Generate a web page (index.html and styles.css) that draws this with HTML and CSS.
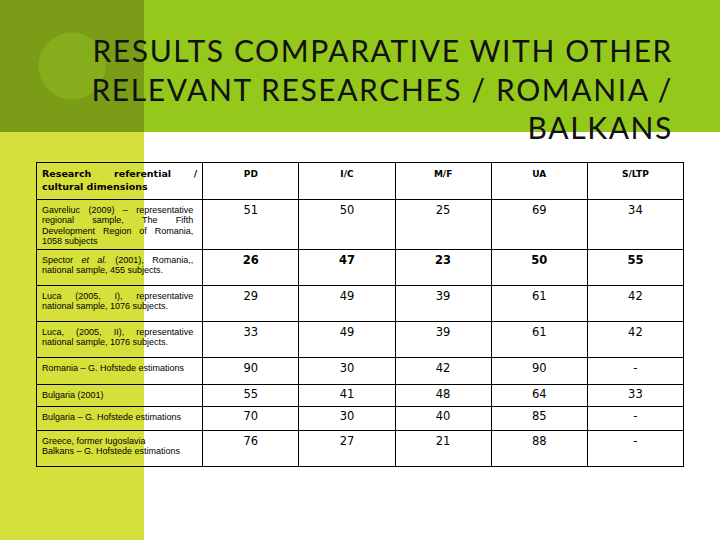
FILE: index.html
```html
<!DOCTYPE html>
<html>
<head>
<meta charset="utf-8">
<link rel="stylesheet" href="styles.css">
</head>
<body>
<div class="slide">
  <h1 class="title">RESULTS COMPARATIVE WITH OTHER<br>RELEVANT RESEARCHES / ROMANIA /<br>BALKANS</h1>
  <table class="data">
    <colgroup>
      <col class="c-ref"><col class="c-num"><col class="c-num"><col class="c-num"><col class="c-num"><col class="c-num">
    </colgroup>
    <tr class="r-head">
      <th class="ref">Research referential / cultural dimensions</th>
      <th>PD</th><th>I/C</th><th>M/F</th><th>UA</th><th>S/LTP</th>
    </tr>
    <tr class="r1">
      <td class="ref">Gavreliuc (2009) – representative regional sample, The Fifth Development Region of Romania, 1058 subjects</td>
      <td>51</td><td>50</td><td>25</td><td>69</td><td>34</td>
    </tr>
    <tr class="r2 bold">
      <td class="ref">Spector <i>et al.</i> (2001), Romania,, national sample, 455 subjects.</td>
      <td>26</td><td>47</td><td>23</td><td>50</td><td>55</td>
    </tr>
    <tr class="r3">
      <td class="ref">Luca (2005, I), representative national sample, 1076 subjects.</td>
      <td>29</td><td>49</td><td>39</td><td>61</td><td>42</td>
    </tr>
    <tr class="r4">
      <td class="ref">Luca, (2005, II), representative national sample, 1076 subjects.</td>
      <td>33</td><td>49</td><td>39</td><td>61</td><td>42</td>
    </tr>
    <tr class="r5">
      <td class="ref">Romania – G. Hofstede estimations</td>
      <td>90</td><td>30</td><td>42</td><td>90</td><td>-</td>
    </tr>
    <tr class="r6">
      <td class="ref">Bulgaria (2001)</td>
      <td>55</td><td>41</td><td>48</td><td>64</td><td>33</td>
    </tr>
    <tr class="r7">
      <td class="ref">Bulgaria – G. Hofstede estimations</td>
      <td>70</td><td>30</td><td>40</td><td>85</td><td>-</td>
    </tr>
    <tr class="r8">
      <td class="ref left">Greece, former Iugoslavia<br>Balkans – G. Hofstede estimations</td>
      <td>76</td><td>27</td><td>21</td><td>88</td><td>-</td>
    </tr>
  </table>
</div>
</body>
</html>
```

FILE: styles.css
```css
html, body {
  margin: 0;
  padding: 0;
}
.slide {
  width: 720px;
  height: 540px;
  overflow: hidden;
  box-sizing: border-box;
  padding-top: 31px;
  background:
    radial-gradient(circle at 72px 66px, #86ad1b 33px, rgba(134,173,27,0) 34px) 0 0 / 144px 132px no-repeat,
    linear-gradient(#7a9c16, #7a9c16) 0 0 / 144px 132px no-repeat,
    linear-gradient(#94c81a, #94c81a) 0 0 / 100% 132px no-repeat,
    linear-gradient(#d6e03a, #d6e03a) 0 0 / 144px 100% no-repeat,
    #ffffff;
}
.title {
  margin: 0;
  padding-right: 47px;
  text-align: right;
  font-family: "Lato", sans-serif;
  font-weight: normal;
  font-size: 30px;
  line-height: 38.5px;
  letter-spacing: 1.6px;
  color: #111;
}
.data {
  margin: 15px 0 0 36px;
  width: 648px;
  border-collapse: collapse;
  table-layout: fixed;
  font-family: "DejaVu Sans", sans-serif;
  color: #000;
}
.c-ref { width: 166px; }
.c-num { width: 96px; }
.data th, .data td {
  border: 1px solid #000;
  padding: 4px 4px 0;
  vertical-align: top;
  text-align: center;
}
.data th {
  font-size: 9px;
  font-weight: bold;
  line-height: 13px;
  padding-top: 5px;
}
.data td {
  font-size: 11.5px;
  line-height: 13px;
}
.data .ref {
  text-align: justify;
  font-family: "Liberation Sans Narrow", "Liberation Sans", sans-serif;
  font-size: 9px;
  line-height: 10.5px;
  padding: 5px 9px 0 5px;
}
.data th.ref {
  font-family: "DejaVu Sans", sans-serif;
  font-size: 9.5px;
  line-height: 13px;
  padding: 4px 5px 0 5px;
}
.data .left {
  text-align: left;
}
.bold td {
  font-weight: bold;
}
.bold td.ref {
  font-weight: normal;
}
.r-head { height: 37px; }
.r1 { height: 50px; }
.r2 { height: 36px; }
.r3 { height: 36px; }
.r4 { height: 36px; }
.r5 { height: 27px; }
.r6 { height: 22px; }
.r7 { height: 24px; }
.r8 { height: 36px; }
.r6 td, .r7 td { padding-top: 3px; }
```
